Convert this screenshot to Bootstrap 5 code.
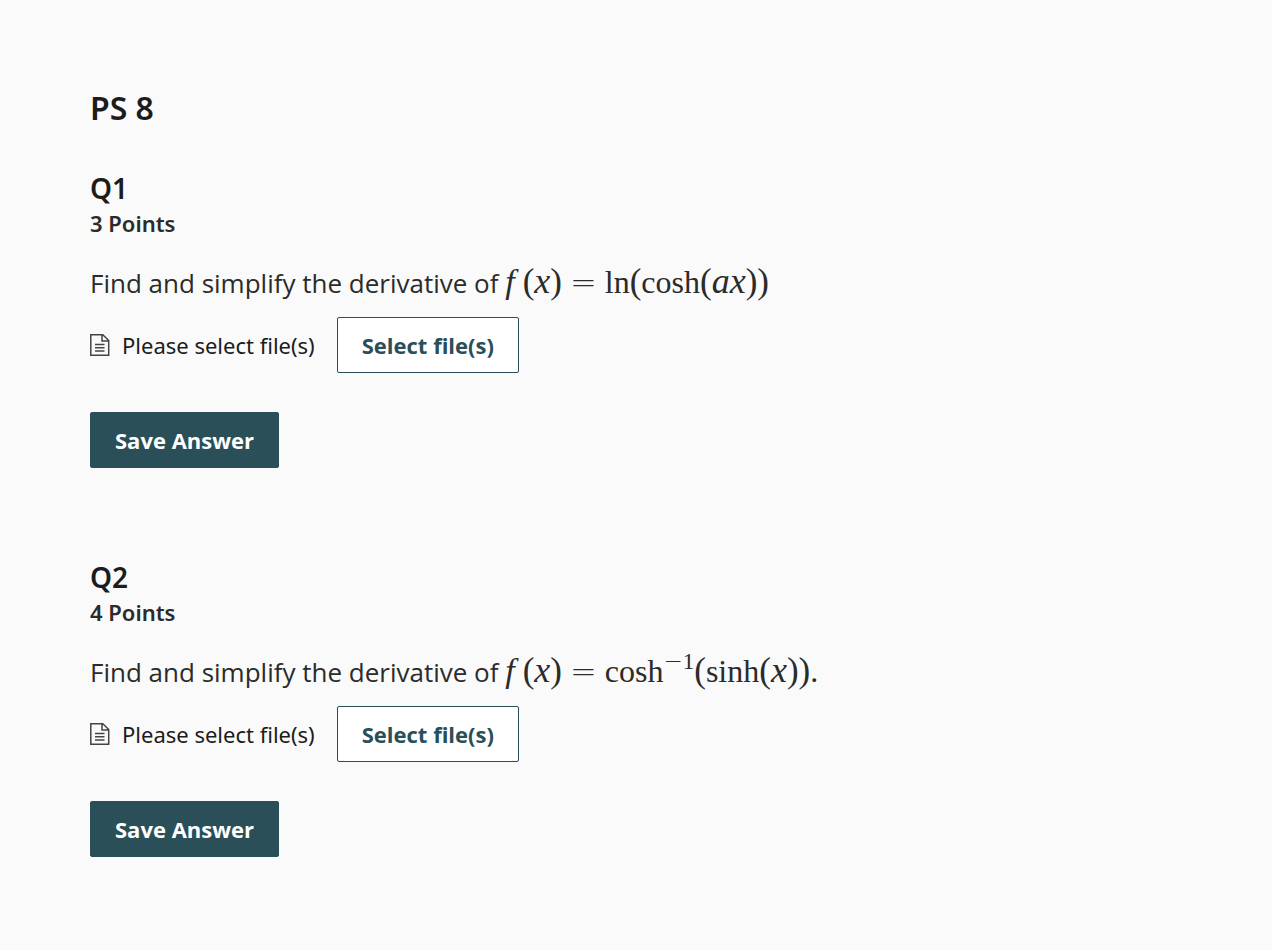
<!DOCTYPE html>
<html lang="en">
<head>
<meta charset="utf-8">
<meta name="viewport" content="width=device-width, initial-scale=1">
<title>PS 8</title>
<link href="https://cdn.jsdelivr.net/npm/bootstrap@5.3.0/dist/css/bootstrap.min.css" rel="stylesheet">
<style>
body{background:#fafafa;color:#1c1c1c;font-family:"Noto Sans","Open Sans",sans-serif}
.page{padding:90px 90px 92px}
h1{font-size:32px;line-height:36px;font-weight:600;margin:0 0 44px}
h2{font-size:28px;line-height:36px;font-weight:600;margin:0}
.points{font-size:22px;line-height:34px;font-weight:600;color:#2b2b2b;margin:0 0 23px}
.prompt{font-family:"Open Sans",sans-serif;font-size:26px;line-height:38px;color:#2b2b2b;margin:0 0 15px}
.formula{font-family:"Liberation Serif",serif;font-size:32px;line-height:1;white-space:nowrap}
.formula i{font-size:36px}
.formula .fn{font-size:34px;margin-right:8px}
.formula b{font-size:35px;font-weight:400}
.formula .eq{font-family:"DejaVu Sans Light","DejaVu Sans",sans-serif;font-weight:200;margin:0 8px}
.formula sup{font-size:23px;line-height:0;top:-13px;vertical-align:baseline}
.minus{font-family:"DejaVu Sans Light","DejaVu Sans",sans-serif;font-weight:200}
.upload{font-size:22px;line-height:34px;margin-bottom:39px}
.file-icon{width:20px;height:24px;margin-right:12px}
.btn{--bs-btn-font-family:"Open Sans",sans-serif;--bs-btn-font-size:22px;--bs-btn-font-weight:700;--bs-btn-line-height:34px;--bs-btn-padding-x:24px;--bs-btn-padding-y:10px;--bs-btn-border-radius:2px}
.btn-pick{--bs-btn-color:#2a4f59;--bs-btn-bg:#fff;--bs-btn-border-color:#2a4f59;--bs-btn-hover-color:#fff;--bs-btn-hover-bg:#2a4f59;margin-left:22px}
.btn-save{--bs-btn-color:#fff;--bs-btn-bg:#2a4f59;--bs-btn-border-color:#2a4f59;--bs-btn-hover-color:#fff;--bs-btn-hover-bg:#203d45}
.question + .question{margin-top:91px}
</style>
</head>
<body>
<main class="page">
<h1>PS 8</h1>
<section class="question">
<h2>Q1</h2>
<p class="points">3 Points</p>
<p class="prompt">Find and simplify the derivative of <span class="formula"><i class="fn">f</i><b>(</b><i>x</i><b>)</b><span class="eq">=</span>ln<b>(</b>cosh<b>(</b><i>ax</i><b>))</b></span></p>
<div class="upload d-flex align-items-center">
<svg class="file-icon" viewBox="0 0 20 24" fill="none" stroke="#444" stroke-width="1.5" aria-hidden="true"><path d="M.8 1.8h12l5.9 5.7v14.7H.8zM12 1.8v6.3h6.7M5 11.5h9.5M5 14.8h9.5M5 18h9.5"/></svg>
<span>Please select file(s)</span><button type="button" class="btn btn-pick">Select file(s)</button>
</div>
<button type="button" class="btn btn-save">Save Answer</button>
</section>
<section class="question">
<h2>Q2</h2>
<p class="points">4 Points</p>
<p class="prompt">Find and simplify the derivative of <span class="formula"><i class="fn">f</i><b>(</b><i>x</i><b>)</b><span class="eq">=</span>cosh<sup><span class="minus">−</span>1</sup><b>(</b>sinh<b>(</b><i>x</i><b>))</b>.</span></p>
<div class="upload d-flex align-items-center">
<svg class="file-icon" viewBox="0 0 20 24" fill="none" stroke="#444" stroke-width="1.5" aria-hidden="true"><path d="M.8 1.8h12l5.9 5.7v14.7H.8zM12 1.8v6.3h6.7M5 11.5h9.5M5 14.8h9.5M5 18h9.5"/></svg>
<span>Please select file(s)</span><button type="button" class="btn btn-pick">Select file(s)</button>
</div>
<button type="button" class="btn btn-save">Save Answer</button>
</section>
</main>
<script src="https://cdn.jsdelivr.net/npm/bootstrap@5.3.0/dist/js/bootstrap.bundle.min.js"></script>
</body>
</html>
